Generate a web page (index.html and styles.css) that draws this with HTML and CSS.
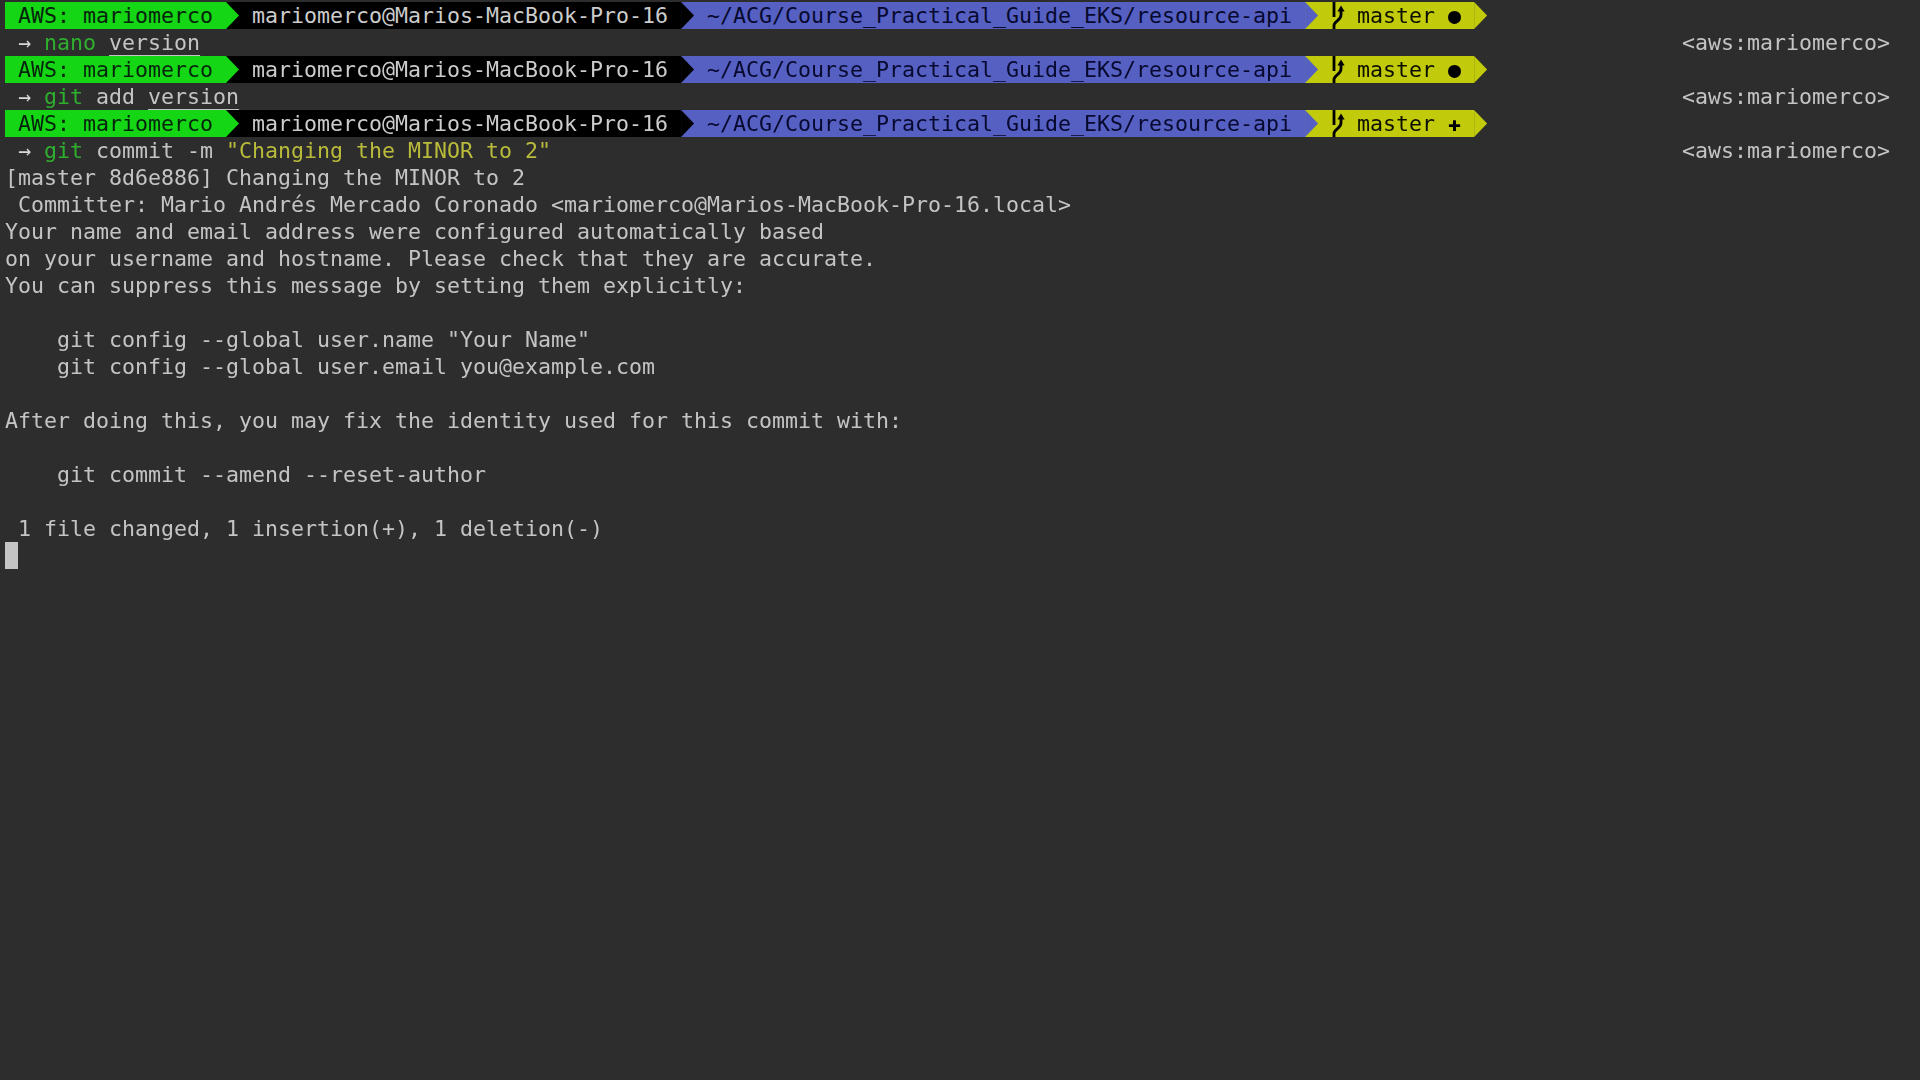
FILE: index.html
```html
<!DOCTYPE html>
<html lang="en">
<head>
<meta charset="utf-8">
<title>Terminal</title>
<link rel="stylesheet" href="styles.css">
</head>
<body>
<main class="terminal">
  <div class="row prompt-bar">
    <span class="seg seg-green">AWS: mariomerco</span><i class="sep on-black from-green"></i>
    <span class="seg seg-black">mariomerco@Marios-MacBook-Pro-16</span><i class="sep on-blue from-black"></i>
    <span class="seg seg-blue">~/ACG/Course_Practical_Guide_EKS/resource-api</span><i class="sep on-yellow from-blue"></i>
    <span class="seg seg-yellow"><svg class="branch" viewBox="0 0 13 27" aria-hidden="true"><path d="M3 0V15M3 27V23.5C3 19 10 18.5 10 13V8"/><path class="tip" d="M10 3.6L13.6 9.6H6.4Z"/></svg> master <span class="state">●</span></span><i class="sep from-yellow"></i>
  </div>
  <div class="row"><span class="cmd"> <span class="arrow">→</span> <span class="green">nano</span> <span class="path">version</span></span><span class="rprompt">&lt;aws:mariomerco&gt;</span></div>
  <div class="row prompt-bar">
    <span class="seg seg-green">AWS: mariomerco</span><i class="sep on-black from-green"></i>
    <span class="seg seg-black">mariomerco@Marios-MacBook-Pro-16</span><i class="sep on-blue from-black"></i>
    <span class="seg seg-blue">~/ACG/Course_Practical_Guide_EKS/resource-api</span><i class="sep on-yellow from-blue"></i>
    <span class="seg seg-yellow"><svg class="branch" viewBox="0 0 13 27" aria-hidden="true"><path d="M3 0V15M3 27V23.5C3 19 10 18.5 10 13V8"/><path class="tip" d="M10 3.6L13.6 9.6H6.4Z"/></svg> master <span class="state">●</span></span><i class="sep from-yellow"></i>
  </div>
  <div class="row"><span class="cmd"> <span class="arrow">→</span> <span class="green">git</span> add <span class="path">version</span></span><span class="rprompt">&lt;aws:mariomerco&gt;</span></div>
  <div class="row prompt-bar">
    <span class="seg seg-green">AWS: mariomerco</span><i class="sep on-black from-green"></i>
    <span class="seg seg-black">mariomerco@Marios-MacBook-Pro-16</span><i class="sep on-blue from-black"></i>
    <span class="seg seg-blue">~/ACG/Course_Practical_Guide_EKS/resource-api</span><i class="sep on-yellow from-blue"></i>
    <span class="seg seg-yellow"><svg class="branch" viewBox="0 0 13 27" aria-hidden="true"><path d="M3 0V15M3 27V23.5C3 19 10 18.5 10 13V8"/><path class="tip" d="M10 3.6L13.6 9.6H6.4Z"/></svg> master <span class="state">✚</span></span><i class="sep from-yellow"></i>
  </div>
  <div class="row"><span class="cmd"> <span class="arrow">→</span> <span class="green">git</span> commit -m <span class="string">"Changing the MINOR to 2"</span></span><span class="rprompt">&lt;aws:mariomerco&gt;</span></div>
  <div class="row">[master 8d6e886] Changing the MINOR to 2</div>
  <div class="row"> Committer: Mario Andrés Mercado Coronado &lt;mariomerco@Marios-MacBook-Pro-16.local&gt;</div>
  <div class="row">Your name and email address were configured automatically based</div>
  <div class="row">on your username and hostname. Please check that they are accurate.</div>
  <div class="row">You can suppress this message by setting them explicitly:</div>
  <div class="row"></div>
  <div class="row">    git config --global user.name "Your Name"</div>
  <div class="row">    git config --global user.email you@example.com</div>
  <div class="row"></div>
  <div class="row">After doing this, you may fix the identity used for this commit with:</div>
  <div class="row"></div>
  <div class="row">    git commit --amend --reset-author</div>
  <div class="row"></div>
  <div class="row"> 1 file changed, 1 insertion(+), 1 deletion(-)</div>
  <div class="row"><span class="cursor"></span></div>
</main>
</body>
</html>
```
FILE: styles.css
```css
html, body {
  margin: 0;
  height: 100%;
  background: #2d2d2d;
}

.terminal {
  box-sizing: border-box;
  height: 1080px;
  padding: 2px 30px 0 5px;
  overflow: hidden;
  color: #c4c4c4;
  font-family: "DejaVu Sans Mono", "Liberation Mono", monospace;
  font-size: 21.6px;
  filter: blur(0.4px);
}

.row {
  display: flex;
  justify-content: flex-start;
  height: 27px;
  line-height: 27px;
  white-space: pre;
}

.cmd { flex: 1; }

.rprompt { flex: none; }

.prompt-bar { align-items: stretch; white-space: normal; }

.seg {
  flex: none;
  padding: 0 1ch;
  color: #000;
  white-space: pre;
}

.seg-green { background: #14d614; color: #06240c; }
.seg-black { background: #000; color: #cccccc; }
.seg-blue { background: #5560c2; color: #07092e; }
.seg-yellow { display: flex; align-items: stretch; background: #c2ca0c; color: #0c0e00; }

.sep {
  position: relative;
  flex: none;
  width: 1ch;
}

.sep::before {
  content: "";
  display: block;
  height: 100%;
  clip-path: polygon(0 0, 100% 50%, 0 100%);
}

.on-black { background: #000; }
.on-blue { background: #5560c2; }
.on-yellow { background: #c2ca0c; }

.from-green::before { background: #14d614; }
.from-black::before { background: #000; }
.from-blue::before { background: #5560c2; }
.from-yellow::before { background: #c2ca0c; }

.branch {
  flex: none;
  width: 13px;
  height: 27px;
  overflow: visible;
  fill: none;
  stroke: #000;
  stroke-width: 2.8;
}

.branch .tip { fill: #000; stroke: none; }

.state { color: #000; }

.arrow { color: #d8d8d8; }
.green { color: #2eb02e; }
.string { color: #b9bb3a; }

.path {
  text-decoration: underline;
  text-decoration-thickness: 1.5px;
  text-underline-offset: 5px;
}

.cursor {
  display: block;
  width: 13px;
  height: 27px;
  background: #c4c4c4;
}
```
